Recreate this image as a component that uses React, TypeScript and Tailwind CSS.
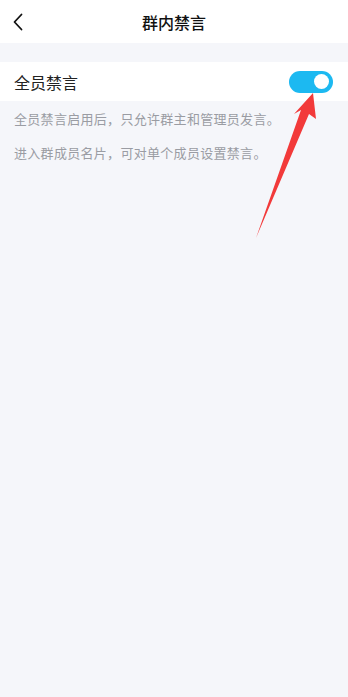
export default function App() {
  return (
    <div
      className="relative w-[348px] h-[697px] bg-[#f5f6fa] overflow-hidden"
      style={{ fontFamily: '"Noto Sans CJK SC", "Noto Sans", sans-serif' }}
    >
      {/* Header */}
      <div className="relative h-[43px] bg-white flex items-center justify-center">
        <svg
          className="absolute left-[12px] top-[13px]"
          width="12"
          height="18"
          viewBox="0 0 12 18"
          fill="none"
        >
          <path d="M9.5 1.5L2.5 9l7 7.5" stroke="#111" strokeWidth="1.8" strokeLinecap="round" strokeLinejoin="round" />
        </svg>
        <span className="text-[16px] font-medium text-[#111] leading-none">群内禁言</span>
      </div>

      <div className="h-[19px]" />

      {/* Toggle row */}
      <div className="h-[39px] bg-white flex items-center justify-between pl-[14px] pr-[15px]">
        <span className="text-[16px] text-[#222] leading-none">全员禁言</span>
        <div className="w-[44px] h-[22px] rounded-full bg-[#1cb9f1] flex items-center justify-end pr-[4px]">
          <div className="w-[15px] h-[15px] rounded-full bg-white" />
        </div>
      </div>

      {/* Descriptions */}
      <div className="px-[14px] pt-[8px] flex flex-col gap-[15px] text-[13px] tracking-[0.3px] text-[#9a9ca3] leading-[19px]">
        <p>全员禁言启用后，只允许群主和管理员发言。</p>
        <p>进入群成员名片，可对单个成员设置禁言。</p>
      </div>

      {/* Annotation arrow */}
      <svg className="absolute left-0 top-0 pointer-events-none" width="348" height="697">
        <polygon
          points="313,93 316,119 309,114 256,238 301,110 294,114"
          fill="#f23a3a"
        />
      </svg>
    </div>
  );
}
